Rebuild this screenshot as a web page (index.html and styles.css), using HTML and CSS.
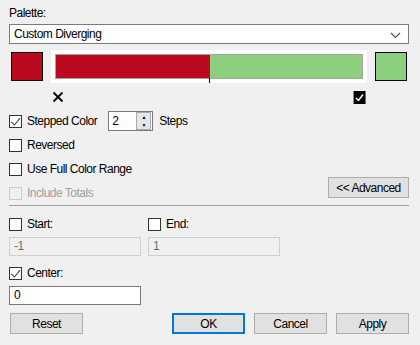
FILE: index.html
```html
<!DOCTYPE html>
<html>
<head>
    <title>Palette</title>
    <link rel="stylesheet" href="styles.css">
</head>
<body>
    <div class="dialog">
        <div class="label">Palette:</div>
        <div class="combo">
            <span>Custom Diverging</span>
            <svg class="arrow" width="11" height="7" viewBox="0 0 11 7"><path d="M1 1 L5.5 5.5 L10 1" fill="none" stroke="#555" stroke-width="1.2"/></svg>
        </div>

        <div class="ramp">
            <div class="swatch red"></div>
            <div class="bar-panel">
                <div class="bar">
                    <div class="seg red" style="width: 50.3%"></div>
                    <div class="seg green"></div>
                    <div class="tick"></div>
                </div>
            </div>
            <div class="swatch green"></div>
        </div>

        <div class="markers">
            <svg class="mark-x" width="12" height="12" viewBox="0 0 12 12"><path d="M1.5 1.5 L10.5 10.5 M10.5 1.5 L1.5 10.5" stroke="#000" stroke-width="1.8"/></svg>
            <span class="mark-check">
                <svg width="13" height="13" viewBox="0 0 13 13"><rect width="13" height="13" fill="#000"/><rect x="0" y="0" width="1" height="13" fill="#c87a1e"/><rect x="12" y="0" width="1" height="13" fill="#2a7ad0"/><path d="M3 7 L5.5 9.5 L10 3.5" fill="none" stroke="#fff" stroke-width="1.4"/></svg>
            </span>
        </div>

        <div class="row">
            <span class="check checked"></span>
            <span class="text">Stepped Color</span>
            <div class="spin">
                <span class="spin-val">2</span>
                <div class="spin-btns">
                    <span class="spin-btn">&#9650;</span>
                    <span class="spin-btn">&#9660;</span>
                </div>
            </div>
            <span class="text">Steps</span>
        </div>
        <div class="row">
            <span class="check"></span>
            <span class="text">Reversed</span>
        </div>
        <div class="row">
            <span class="check"></span>
            <span class="text">Use Full Color Range</span>
        </div>
        <div class="row last">
            <span class="check disabled"></span>
            <span class="text muted">Include Totals</span>
            <button class="btn advanced">&lt;&lt; Advanced</button>
        </div>

        <div class="separator"></div>

        <div class="range">
            <div class="col">
                <div class="row">
                    <span class="check"></span>
                    <span class="text">Start:</span>
                </div>
                <div class="field disabled">-1</div>
            </div>
            <div class="col">
                <div class="row">
                    <span class="check"></span>
                    <span class="text">End:</span>
                </div>
                <div class="field disabled">1</div>
            </div>
        </div>

        <div class="row center-row">
            <span class="check checked"></span>
            <span class="text">Center:</span>
        </div>
        <div class="field center-field">0</div>

        <div class="buttons">
            <button class="btn">Reset</button>
            <div class="spacer"></div>
            <button class="btn default">OK</button>
            <button class="btn">Cancel</button>
            <button class="btn">Apply</button>
        </div>
    </div>
</body>
</html>
```

FILE: styles.css
```css
body {
    margin: 0;
    background-color: #f0f0f0;
    font-family: "Liberation Sans", Arial, sans-serif;
    font-size: 12px;
    letter-spacing: -0.5px;
    color: #000;
}
.dialog {
    width: 400px;
    padding: 6px 11px 0 9px;
}
.label {
    height: 14px;
    line-height: 14px;
    margin-bottom: 4px;
}
.combo {
    display: flex;
    align-items: center;
    justify-content: space-between;
    height: 18px;
    border: 1px solid #7a7a7a;
    background-color: #fff;
    padding: 0 7px 0 4px;
}
.arrow {
    margin-top: 2px;
}
.ramp {
    display: flex;
    align-items: center;
    margin-top: 6px;
    height: 33px;
}
.swatch {
    width: 30px;
    height: 27px;
    border: 1px solid #000;
}
.ramp .swatch:first-child {
    margin-left: 2px;
}
.red {
    background-color: #b90a1e;
}
.green {
    background-color: #8ccf7e;
}
.bar-panel {
    width: 308px;
    height: 25px;
    padding: 4px;
    margin: 0 8px;
    background-color: #fff;
}
.bar {
    position: relative;
    display: flex;
    height: 23px;
    border: 1px solid #a8a49c;
}
.seg {
    height: 100%;
}
.seg.green {
    flex: 1;
}
.tick {
    position: absolute;
    left: 153px;
    bottom: -5px;
    width: 1px;
    height: 5px;
    background-color: #000;
}
.markers {
    position: relative;
    height: 26px;
}
.mark-x {
    position: absolute;
    left: 43px;
    top: 8px;
}
.mark-check {
    position: absolute;
    left: 344px;
    top: 8px;
    line-height: 0;
}
.row {
    display: flex;
    align-items: center;
    height: 24px;
}
.check {
    width: 11px;
    height: 11px;
    border: 1px solid #333;
    background-color: #fff;
    margin-right: 5px;
    position: relative;
}
.check.checked::after {
    content: "";
    position: absolute;
    left: 3px;
    top: 0px;
    width: 4px;
    height: 8px;
    border-right: 1px solid #333;
    border-bottom: 1px solid #333;
    transform: rotate(40deg);
}
.check.disabled {
    border-color: #ccc;
    background-color: #f0f0f0;
}
.text.muted {
    color: #a0a0a0;
}
.spin {
    display: flex;
    align-items: center;
    width: 43px;
    height: 18px;
    border: 1px solid #7a7a7a;
    background-color: #fff;
    margin: 0 6px 0 11px;
}
.spin-val {
    flex: 1;
    padding-left: 3px;
}
.spin-btns {
    display: flex;
    flex-direction: column;
    width: 13px;
    height: 16px;
    margin-right: 1px;
    border: 1px solid #aaa;
    background-color: #e6e6e6;
}
.spin-btn {
    height: 8px;
    line-height: 8px;
    font-size: 5px;
    text-align: center;
}
.btn {
    height: 21px;
    border: 1px solid #adadad;
    background-color: #e1e1e1;
    font-family: "Liberation Sans", Arial, sans-serif;
    font-size: 12px;
    letter-spacing: -0.5px;
    padding: 0;
}
.advanced {
    width: 81px;
    margin-left: auto;
    margin-top: -11px;
}
.separator {
    height: 1px;
    background-color: #a0a0a0;
}
.range {
    display: flex;
    gap: 7px;
    margin-top: 6px;
}
.col {
    width: 132px;
}
.field {
    width: 126px;
    height: 17px;
    line-height: 17px;
    border: 1px solid #7a7a7a;
    background-color: #fff;
    padding-left: 4px;
    margin-top: 1px;
}
.field.disabled {
    border-color: #cfcfcf;
    background-color: #f0f0f0;
    color: #6d6d6d;
}
.center-row {
    margin-top: 5px;
}
.buttons {
    display: flex;
    margin-top: 8px;
    padding-left: 1px;
}
.buttons .btn {
    width: 73px;
}
.spacer {
    flex: 1;
}
.buttons .btn + .btn {
    margin-left: 9px;
}
.btn.default {
    border: 2px solid #0078d7;
}
```
